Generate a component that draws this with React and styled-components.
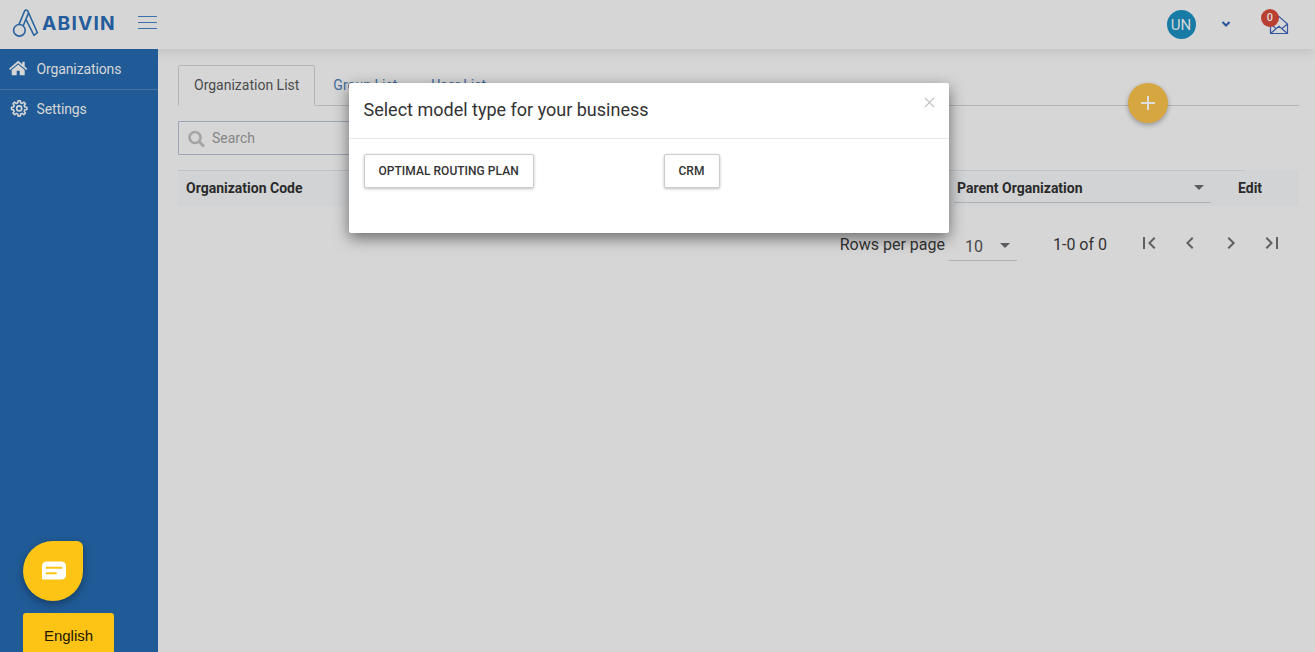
import React from "react";
import styled, { createGlobalStyle } from "styled-components";

const GlobalStyle = createGlobalStyle`
  * { box-sizing: border-box; }
  body { margin: 0; overflow: hidden; background: #d6d6d6; font-family: Roboto, "Liberation Sans", sans-serif; font-size: 14px; color: #2b2b2b; }
  button, input { font-family: inherit; }
`;

const Page = styled.div`
  position: relative;
  display: flex;
  flex-direction: column;
  height: 652px;
  background: #d6d6d6;
`;
const Header = styled.header`
  position: relative;
  z-index: 1;
  display: flex;
  align-items: flex-start;
  height: 49px;
  flex: none;
  background: #d6d6d6;
  box-shadow: 0 1px 12px rgba(0, 0, 0, 0.14);
`;
const Brand = styled.div`
  display: flex;
  width: 126px;
  padding: 8px 0 0 12px;
`;
const BrandName = styled.span`
  margin-left: 3px;
  font: 700 19.2px/31px Inter, sans-serif;
  letter-spacing: 1.2px;
  color: #245c9c;
`;
const MenuButton = styled.div`
  display: flex;
  flex-direction: column;
  justify-content: space-between;
  width: 19px;
  height: 13px;
  margin: 16px auto 0 12px;
`;
const MenuLine = styled.span`
  height: 1px;
  background: #3c72ac;
`;
const Avatar = styled.div`
  width: 29px;
  height: 29px;
  margin-top: 10px;
  padding-right: 1px;
  border-radius: 50%;
  background: #177ba6;
  color: #d6d6d6;
  font: 15px/30px Roboto, sans-serif;
  text-align: center;
`;
const Chevron = styled.svg`
  width: 10px;
  height: 8px;
  margin: 20px 0 0 24.5px;
`;
const Mail = styled.div`
  position: relative;
  width: 28px;
  height: 28px;
  margin: 8px 26px 0 30.5px;
`;
const MailIcon = styled.svg`
  display: block;
  width: 28px;
  height: 28px;
`;
const Badge = styled.span`
  position: absolute;
  left: 0;
  top: 1px;
  width: 18px;
  height: 18px;
  border-radius: 50%;
  background: #b93f31;
  color: #dedede;
  font: 500 11px/17px Roboto, sans-serif;
  text-align: center;
`;
const Body = styled.div`
  display: flex;
  flex: 1;
  min-height: 0;
`;
const Sidebar = styled.nav`
  position: relative;
  z-index: 2;
  display: flex;
  flex-direction: column;
  width: 158px;
  background: #205b97;
`;
const NavItem = styled.a`
  display: flex;
  align-items: center;
  height: ${(p) => (p.$line ? 41 : 37)}px;
  padding-left: 9px;
  border-bottom: ${(p) => (p.$line ? "1px solid #44739f" : "0")};
  color: #d6d6d6;
  font-size: 14px;
  letter-spacing: -0.12px;
  svg { width: 20px; height: 20px; margin-right: 7.5px; flex: none; }
`;
const Dock = styled.div`
  display: flex;
  flex-direction: column;
  gap: 12px;
  margin: auto 0 0 23px;
`;
const ChatButton = styled.div`
  display: flex;
  width: 60px;
  height: 60px;
  padding: 20px 0 0 19px;
  border-radius: 30px 6px 30px 30px;
  background: #fdc416;
  box-shadow: 0 3px 8px rgba(0, 0, 0, 0.35);
`;
const Language = styled.div`
  width: 91px;
  height: 39px;
  border-radius: 3px 3px 0 0;
  background: #fdc416;
  color: #1c1600;
  font: 15px/46px "Liberation Sans", sans-serif;
  text-align: center;
`;
const Content = styled.main`
  flex: 1;
  padding: 16px 16px 0 20px;
`;
const Tabs = styled.div`
  display: flex;
  height: 41px;
`;
const Tab = styled.div`
  padding: ${(p) => (p.$active ? "0 15px" : "0 15px 0 17px")};
  border: 1px solid ${(p) => (p.$active ? "#b4b4b4" : "transparent")};
  border-bottom-color: ${(p) => (p.$active ? "transparent" : "#b4b4b4")};
  border-radius: 2px 2px 0 0;
  color: ${(p) => (p.$active ? "#4b4b4b" : "#446b9c")};
  line-height: 39px;
  white-space: nowrap;
`;
const TabRule = styled.div`
  flex: 1;
  border-bottom: 1px solid #b4b4b4;
`;
const AddButton = styled.div`
  position: absolute;
  left: 1128px;
  top: 83px;
  display: grid;
  place-items: center;
  width: 40px;
  height: 40px;
  border-radius: 50%;
  background: #d6a640;
  box-shadow: 0 2px 5px rgba(0, 0, 0, 0.3);
`;
const Search = styled.div`
  display: flex;
  align-items: center;
  width: 360px;
  height: 34px;
  margin-top: 15px;
  padding-left: 9px;
  border: 1px solid #9da5b6;
  border-radius: 1px;
  color: #858585;
  svg { margin: 2px 7px 0 0; }
`;
const TableHead = styled.div`
  display: flex;
  height: 36px;
  margin-top: 15px;
  background: #d1d3d5;
  font-weight: 700;
  line-height: 35px;
`;
const CodeCell = styled.div`
  width: 776px;
  padding-left: 8px;
  border-top: 1px solid #bfc1c7;
`;
const ParentCell = styled.div`
  display: flex;
  justify-content: space-between;
  align-items: center;
  width: 257px;
  height: 33px;
  padding: 3px 7px 0 3px;
  border-top: 1px solid #c3c3c6;
  border-bottom: 1px solid #aeb0b2;
`;
const EditCell = styled.div`
  width: 34px;
  padding-left: 27px;
  border-top: 1px solid #c3c3c6;
`;
const Caret = styled.span`
  width: 0;
  height: 0;
  margin-top: -2px;
  border: 5px solid transparent;
  border-top-color: #5b5d60;
  border-bottom: 0;
`;
const Pagination = styled.div`
  display: flex;
  align-items: flex-start;
  justify-content: flex-end;
  padding: 25px 15px 0 0;
  font-size: 16px;
  line-height: 28px;
  color: #333;
`;
const PageSize = styled.div`
  display: flex;
  align-items: center;
  justify-content: space-between;
  width: 68px;
  height: 30px;
  margin: 0 36px 0 4px;
  padding: 2px 7px 0 16px;
  border-bottom: 1px solid #b1b1b1;
  color: #494949;
`;
const PagerButtons = styled.div`
  display: flex;
  gap: 17px;
  margin-left: 30px;
`;
const Modal = styled.section`
  position: absolute;
  z-index: 5;
  left: 349px;
  top: 83px;
  width: 600px;
  height: 150px;
  border-radius: 2px;
  background: #fff;
  box-shadow: 0 5px 15px rgba(0, 0, 0, 0.5);
`;
const ModalHead = styled.div`
  display: flex;
  justify-content: space-between;
  height: 56px;
  padding: 0 14px 0 14.5px;
  border-bottom: 1px solid #e8e8e8;
  color: #333;
  font-size: 18px;
  line-height: 53px;
  svg { margin-top: 14px; }
`;
const ModalBody = styled.div`
  display: grid;
  grid-template-columns: 300px 300px;
  justify-items: start;
  padding: 15px 0 0 15px;
`;
const ModelButton = styled.button`
  height: 34px;
  padding: 0 14px 0 13.5px;
  border: 1px solid #ccc;
  border-radius: 2px;
  background: #fff;
  box-shadow: 0 1px 3px rgba(0, 0, 0, 0.25);
  color: #333;
  font-size: 12px;
  font-weight: 500;
  letter-spacing: 0.04px;
`;

const pagerPaths = [
  "M18.41 16.59L13.82 12l4.59-4.59L17 6l-6 6 6 6zM6 6h2v12H6z",
  "M15.41 7.41L14 6l-6 6 6 6 1.41-1.41L10.83 12z",
  "M10 6L8.59 7.41 13.17 12l-4.58 4.59L10 18l6-6z",
  "M5.59 7.41L10.18 12l-4.59 4.59L7 18l6-6-6-6zM16 6h2v12h-2z",
];

const LogoMark = () => (
  <svg width="27" height="30" viewBox="0 0 27 30" fill="none" stroke="#2a639f" strokeWidth="1.6" strokeLinejoin="round">
    <circle cx="7.4" cy="22.3" r="5.8" />
    <path d="M7 16.4 12.6 3Q14 .9 15.8 3L25.4 24.7 22 27.3 14 11.5M11.2 17.8 16.4 5.4" />
  </svg>
);
const HomeIcon = () => (
  <svg viewBox="0 0 20 20" fill="#d6d6d6">
    <path d="M9.2 1.7 0 9.8l1.1 1.2L9.2 4.2l8.1 6.8 1.1-1.2-2.7-2.3V2.8h-2.4v2.5z" />
    <path d="M9.2 5.5 2.7 11v5.2h5v-4.5h3v4.5h5V11z" />
  </svg>
);
const gear = Array.from({ length: 64 }, (_, i) => {
  const r = i % 8 < 4 ? 7.7 : 5.8;
  const a = ((i - 1.5) * Math.PI) / 32;
  return `${(10.2 + r * Math.sin(a)).toFixed(2)},${(9.4 - r * Math.cos(a)).toFixed(2)}`;
}).join(" ");
const GearIcon = () => (
  <svg viewBox="0 0 20 20" fill="none" stroke="#d6d6d6" strokeWidth="1.6" strokeLinejoin="round">
    <polygon points={gear} />
    <circle cx="10.2" cy="9.4" r="2.5" />
  </svg>
);

export default function App() {
  return (
    <Page>
      <GlobalStyle />
      <Header>
        <Brand><LogoMark /><BrandName>ABIVIN</BrandName></Brand>
        <MenuButton><MenuLine /><MenuLine /><MenuLine /></MenuButton>
        <Avatar>UN</Avatar>
        <Chevron viewBox="0 0 10 8" fill="none" stroke="#25549b" strokeWidth="2"><path d="m1.5 2 3.5 3.5L8.5 2" /></Chevron>
        <Mail>
          <MailIcon viewBox="0 0 28 28" fill="none" stroke="#3658a0" strokeWidth="1.2">
            <path d="M9.5 16 18 8.5l8.5 7.5v9.5h-17zM9.5 16l5.5 4.5M26.5 16 21 20.5M9.5 25.5 18 18.2l8.5 7.3" />
          </MailIcon>
          <Badge>0</Badge>
        </Mail>
      </Header>
      <Body>
        <Sidebar>
          <NavItem $line><HomeIcon />Organizations</NavItem>
          <NavItem><GearIcon />Settings</NavItem>
          <Dock>
            <ChatButton>
              <svg width="24" height="19" viewBox="0 0 24 19">
                <path d="M5 .5h14q5 0 5 5v8q0 5-5 5H1q-1 0-1-1v-12q0-5 5-5z" fill="#fff" />
                <path d="M4.5 6.7h15M4.5 12.3h9.5" stroke="#fdc416" strokeWidth="1.9" strokeLinecap="round" />
              </svg>
            </ChatButton>
            <Language>English</Language>
          </Dock>
        </Sidebar>
        <Content>
          <Tabs>
            <Tab $active>Organization List</Tab>
            <Tab>Group List</Tab>
            <Tab>User List</Tab>
            <TabRule />
          </Tabs>
          <Search>
            <svg width="17" height="18" viewBox="0 0 17 18" fill="none" stroke="#a4a4a4" strokeWidth="2.6"><circle cx="7" cy="7.5" r="5.5" /><path d="m11 11.5 5 5" strokeWidth="3" /></svg>
            Search
          </Search>
          <TableHead>
            <CodeCell>Organization Code</CodeCell>
            <ParentCell>Parent Organization<Caret /></ParentCell>
            <EditCell>Edit</EditCell>
          </TableHead>
          <Pagination>
            Rows per page
            <PageSize>10<Caret /></PageSize>
            1-0 of 0
            <PagerButtons>
              {pagerPaths.map((d) => (
                <svg key={d} width="24" height="24" viewBox="0 0 24 24" fill="#606060"><path d={d} /></svg>
              ))}
            </PagerButtons>
          </Pagination>
        </Content>
      </Body>
      <AddButton>
        <svg width="16" height="16" viewBox="0 0 16 16" stroke="#dedede" strokeWidth="2"><path d="M8 1v14M1 8h14" /></svg>
      </AddButton>
      <Modal>
        <ModalHead>
          Select model type for your business
          <svg width="11" height="11" viewBox="0 0 11 11" stroke="#c7c7c7" strokeWidth="1.4"><path d="m1 1 9 9M10 1l-9 9" /></svg>
        </ModalHead>
        <ModalBody>
          <ModelButton>OPTIMAL ROUTING PLAN</ModelButton>
          <ModelButton>CRM</ModelButton>
        </ModalBody>
      </Modal>
    </Page>
  );
}
